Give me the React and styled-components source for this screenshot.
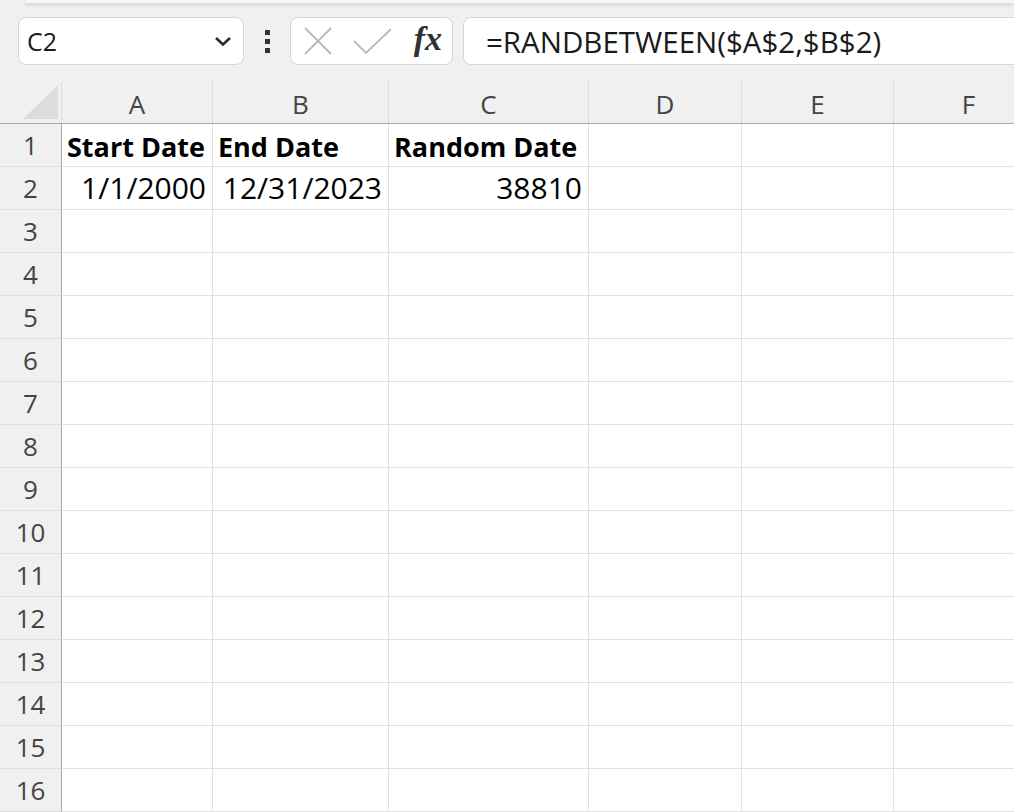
import React from "react";
import styled, { createGlobalStyle } from "styled-components";

const GlobalStyle = createGlobalStyle`
  html, body {
    margin: 0;
    padding: 0;
    background: #f0f0f0;
    overflow: hidden;
  }
  body {
    font-family: "Open Sans", "Noto Sans", sans-serif;
  }
`;

const columns = [
  { key: "A", width: 151 },
  { key: "B", width: 176 },
  { key: "C", width: 200 },
  { key: "D", width: 153 },
  { key: "E", width: 152 },
  { key: "F", width: 150 },
];

const data = {
  1: { A: { v: "Start Date", bold: true }, B: { v: "End Date", bold: true }, C: { v: "Random Date", bold: true } },
  2: { A: { v: "1/1/2000", right: true }, B: { v: "12/31/2023", right: true }, C: { v: "38810", right: true } },
};

const rows = Array.from({ length: 16 }, (_, i) => i + 1);

function App() {
  return (
    <Page>
      <GlobalStyle />
      <TopShade />
      <FormulaBar>
        <NameBox>
          <NameText>C2</NameText>
          <svg width="20" height="12" viewBox="0 0 20 12">
            <path d="M3 3 L10 9.5 L17 3" fill="none" stroke="#2b2b2b" strokeWidth="2.6" />
          </svg>
        </NameBox>
        <Grip>
          <Dot />
          <Dot />
          <Dot />
        </Grip>
        <FxBox>
          <svg width="30" height="30" viewBox="0 0 30 30">
            <path d="M2 2 L28 28 M28 2 L2 28" stroke="#b9b9b9" strokeWidth="1.8" fill="none" />
          </svg>
          <svg width="40" height="28" viewBox="0 0 40 28">
            <path d="M1 14 L13 26 L38 2" stroke="#b9b9b9" strokeWidth="1.8" fill="none" />
          </svg>
          <FxText>fx</FxText>
        </FxBox>
        <FormulaInput>=RANDBETWEEN($A$2,$B$2)</FormulaInput>
      </FormulaBar>

      <Sheet>
        <HeaderRow>
          <Corner>
            <svg width="36" height="34" viewBox="0 0 36 34">
              <polygon points="35,0 35,34 0,34" fill="#dcdcdc" />
            </svg>
          </Corner>
          {columns.map((c) => (
            <ColHeader key={c.key} $w={c.width}>
              {c.key}
            </ColHeader>
          ))}
        </HeaderRow>
        {rows.map((r) => (
          <Row key={r}>
            <RowHeader>{r}</RowHeader>
            {columns.map((c) => {
              const cell = data[r] && data[r][c.key];
              return (
                <Cell key={c.key} $w={c.width} $bold={cell && cell.bold} $right={cell && cell.right}>
                  {cell ? cell.v : ""}
                </Cell>
              );
            })}
          </Row>
        ))}
      </Sheet>
    </Page>
  );
}

export default App;

const Page = styled.div`
  width: 1014px;
  height: 812px;
  overflow: hidden;
  background: #f0f0f0;
`;

const TopShade = styled.div`
  height: 3px;
  margin-left: 25px;
  background: #f7f7f7;
  box-shadow: 0 1px 4px rgba(0, 0, 0, 0.18);
`;

const FormulaBar = styled.div`
  display: flex;
  align-items: center;
  height: 48px;
  margin-top: 14px;
  padding-left: 18px;
`;

const BoxBase = styled.div`
  box-sizing: border-box;
  height: 48px;
  background: #ffffff;
  border: 1px solid #d6d6d6;
  border-radius: 8px;
  display: flex;
  align-items: center;
`;

const NameBox = styled(BoxBase)`
  width: 226px;
  padding: 0 10px 0 8px;
  justify-content: space-between;
`;

const NameText = styled.span`
  font-size: 25px;
  color: #1a1a1a;
`;

const Grip = styled.div`
  width: 46px;
  display: flex;
  flex-direction: column;
  align-items: center;
  gap: 4px;
`;

const Dot = styled.span`
  width: 5px;
  height: 5px;
  background: #333333;
`;

const FxBox = styled(BoxBase)`
  width: 163px;
  padding: 0 10px 0 12px;
  justify-content: space-between;
`;

const FxText = styled.span`
  font-family: "Liberation Serif", "DejaVu Serif", serif;
  font-style: italic;
  font-weight: bold;
  font-size: 34px;
  color: #303030;
  margin-top: -4px;
`;

const FormulaInput = styled(BoxBase)`
  flex: 1;
  margin-left: 10px;
  margin-right: -20px;
  padding-left: 22px;
  font-size: 29.5px;
  color: #1a1a1a;
  border-top-right-radius: 0;
  border-bottom-right-radius: 0;
`;

const Sheet = styled.div`
  margin-top: 17px;
  display: flex;
  flex-direction: column;
`;

const HeaderRow = styled.div`
  display: flex;
  height: 42px;
  box-sizing: border-box;
  border-bottom: 1px solid #a8a8a8;
`;

const Corner = styled.div`
  box-sizing: border-box;
  width: 62px;
  flex: none;
  border-right: 1px solid #dadada;
  display: flex;
  align-items: flex-end;
  padding-left: 23px;
  padding-bottom: 4px;
`;

const ColHeader = styled.div`
  box-sizing: border-box;
  width: ${(p) => p.$w}px;
  flex: none;
  border-right: 1px solid #dcdcdc;
  display: flex;
  align-items: center;
  justify-content: center;
  font-size: 26px;
  color: #444444;
  padding-top: 2px;
`;

const Row = styled.div`
  display: flex;
  height: 43px;
`;

const RowHeader = styled.div`
  box-sizing: border-box;
  width: 62px;
  flex: none;
  border-right: 1px solid #a8a8a8;
  border-bottom: 1px solid #dedede;
  display: flex;
  align-items: center;
  justify-content: center;
  font-size: 26px;
  color: #444444;
`;

const Cell = styled.div`
  box-sizing: border-box;
  width: ${(p) => p.$w}px;
  flex: none;
  background: #ffffff;
  border-right: 1px solid #e1e1e1;
  border-bottom: 1px solid #e1e1e1;
  display: flex;
  align-items: flex-end;
  justify-content: ${(p) => (p.$right ? "flex-end" : "flex-start")};
  padding: 0 6px 1px 5px;
  font-size: ${(p) => (p.$bold ? 27 : 30)}px;
  font-weight: ${(p) => (p.$bold ? 700 : 400)};
  color: #000000;
  white-space: nowrap;
  overflow: hidden;
`;
